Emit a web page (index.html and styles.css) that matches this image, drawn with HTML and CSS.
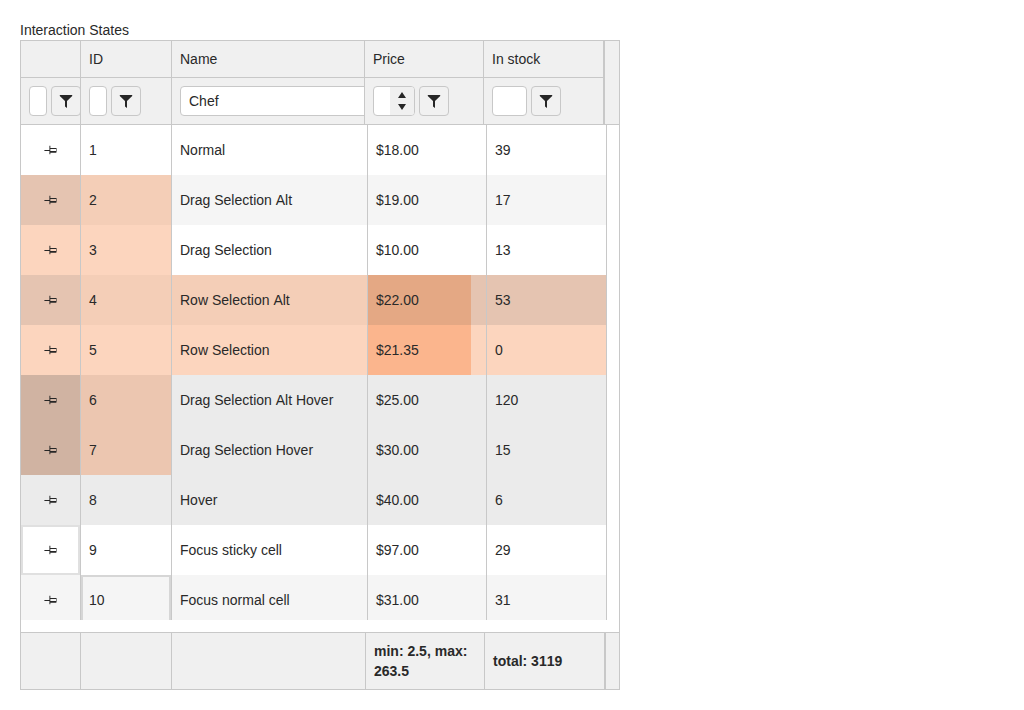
FILE: index.html
```html
<!DOCTYPE html>
<html lang="en">
<head>
<meta charset="utf-8">
<title>Interaction States</title>
<link rel="stylesheet" href="styles.css">
</head>
<body>
<svg class="defs" aria-hidden="true">
  <symbol id="filter" viewBox="0 0 16 16"><path d="M1.8 2h12.4v1L9 8v7l-2-1.5V8L1.8 3z"/></symbol>
  <symbol id="pin" viewBox="0 0 13 10">
    <path fill="#262626" d="M.4 5H6v1H.4zM6 3h6v1H6zM6 6h6v1.7H6z"/>
    <path fill="#262626" fill-opacity=".6" d="M5 .8h1.6v8.4H5zM12 3h.9v4.5H12z"/>
  </symbol>
</svg>
<h1 class="title">Interaction States</h1>
<main class="grid">
  <header class="head">
    <div class="head-cols">
      <div class="cell"></div><div class="cell">ID</div><div class="cell">Name</div><div class="cell">Price</div><div class="cell">In stock</div>
      <div class="cell filter"><span class="input w18"></span><button class="btn"><svg><use href="#filter"/></svg></button></div>
      <div class="cell filter"><span class="input w18"></span><button class="btn"><svg><use href="#filter"/></svg></button></div>
      <div class="cell filter"><span class="input wide">Chef</span></div>
      <div class="cell filter"><span class="input numeric"><span class="spin"><svg viewBox="0 0 24 28"><path d="M8 11l4-6 4 6zM8 17h8l-4 6z"/></svg></span></span><button class="btn"><svg><use href="#filter"/></svg></button></div>
      <div class="cell filter"><span class="input w35"></span><button class="btn"><svg><use href="#filter"/></svg></button></div>
    </div>
  </header>
  <section class="body">
    <div class="row"><div class="cell"><svg class="pin"><use href="#pin"/></svg></div><div class="cell">1</div><div class="cell">Normal</div><div class="cell">$18.00</div><div class="cell">39</div></div>
    <div class="row alt"><div class="cell sel-dark"><svg class="pin"><use href="#pin"/></svg></div><div class="cell sel-alt">2</div><div class="cell">Drag Selection Alt</div><div class="cell">$19.00</div><div class="cell">17</div></div>
    <div class="row"><div class="cell sel"><svg class="pin"><use href="#pin"/></svg></div><div class="cell sel">3</div><div class="cell">Drag Selection</div><div class="cell">$10.00</div><div class="cell">13</div></div>
    <div class="row alt"><div class="cell sel-dark"><svg class="pin"><use href="#pin"/></svg></div><div class="cell sel-alt">4</div><div class="cell sel-alt">Row Selection Alt</div><div class="cell sel-dark marked-alt">$22.00</div><div class="cell sel-dark">53</div></div>
    <div class="row"><div class="cell sel"><svg class="pin"><use href="#pin"/></svg></div><div class="cell sel">5</div><div class="cell sel">Row Selection</div><div class="cell sel marked">$21.35</div><div class="cell sel">0</div></div>
    <div class="row hover"><div class="cell sel-hover-dark"><svg class="pin"><use href="#pin"/></svg></div><div class="cell sel-hover">6</div><div class="cell">Drag Selection Alt Hover</div><div class="cell">$25.00</div><div class="cell">120</div></div>
    <div class="row hover"><div class="cell sel-hover-dark"><svg class="pin"><use href="#pin"/></svg></div><div class="cell sel-hover">7</div><div class="cell">Drag Selection Hover</div><div class="cell">$30.00</div><div class="cell">15</div></div>
    <div class="row hover"><div class="cell"><svg class="pin"><use href="#pin"/></svg></div><div class="cell">8</div><div class="cell">Hover</div><div class="cell">$40.00</div><div class="cell">6</div></div>
    <div class="row"><div class="cell focus-sticky"><svg class="pin"><use href="#pin"/></svg></div><div class="cell">9</div><div class="cell">Focus sticky cell</div><div class="cell">$97.00</div><div class="cell">29</div></div>
    <div class="row alt"><div class="cell"><svg class="pin"><use href="#pin"/></svg></div><div class="cell focus">10</div><div class="cell">Focus normal cell</div><div class="cell">$31.00</div><div class="cell">31</div></div>
  </section>
  <footer class="foot">
    <div class="cell"></div><div class="cell"></div><div class="cell"></div><div class="cell">min: 2.5, max: 263.5</div><div class="cell">total: 3119</div><div class="foot-end"></div>
  </footer>
</main>
</body>
</html>
```
FILE: styles.css
```css
* { box-sizing: border-box; }
body {
  margin: 0;
  padding: 20px;
  background: #fff;
  color: #292929;
  font: 14px/20px "Liberation Sans", Arial, sans-serif;
  font-kerning: none;
}
.defs { display: none; }
.title { margin: 0; font-size: 14px; font-weight: 400; }
.grid {
  display: flex;
  flex-direction: column;
  width: 600px;
  height: 650px;
  border: 1px solid #c8c8c8;
}
.cell {
  display: flex;
  align-items: center;
  padding: 0 8px;
  border-right: 1px solid #c8c8c8;
  overflow: hidden;
}
.head { height: 84px; flex: none; background: #f0f0f0; border-bottom: 1px solid #c8c8c8; }
.head-cols {
  display: grid;
  grid-template-columns: 60px 91px 193px 119px 120px;
  grid-template-rows: 37px 46px;
  width: 584px;
  border-right: 1px solid #c8c8c8;
}
.head-cols .cell:nth-child(-n+5) { border-bottom: 1px solid #c8c8c8; }
.filter { gap: 4px; }
.input, .btn {
  flex: none;
  height: 30px;
  border: 1px solid #c8c8c8;
  border-radius: 4px;
}
.input { background: #fff; }
.w18 { width: 18px; }
.w35 { width: 35px; }
.wide { width: 210px; padding: 4px 8px; }
.numeric { display: flex; justify-content: flex-end; width: 42px; overflow: hidden; }
.spin { width: 24px; height: 28px; background: #f0f0f0; fill: #262626; }
.spin svg { display: block; width: 24px; height: 28px; }
.btn {
  display: flex;
  align-items: center;
  justify-content: center;
  width: 30px;
  padding: 0;
  background: #f1f1f1;
  fill: #262626;
}
.btn svg { width: 16px; height: 16px; }
.body { height: 495px; flex: none; overflow: hidden; }
.row {
  display: grid;
  grid-template-columns: 60px 91px 196px 119px 120px;
  width: 586px;
  height: 50px;
}
.row .cell:first-child { justify-content: center; }
.pin { width: 13px; height: 10px; }
.alt { background: #f5f5f5; }
.hover { background: #ebebeb; }
.sel { background: #fcd5be; }
.sel-alt { background: #f4ceb7; }
.sel-dark { background: #e5c4b1; }
.sel-hover { background: #ecc6b0; }
.sel-hover-dark { background: #d0b3a2; }
.marked { background: linear-gradient(to right, #fbb58d 103px, #fcd5be 103px); }
.marked-alt { background: linear-gradient(to right, #e4a884 103px, #e5c4b1 103px); }
.focus-sticky { box-shadow: inset 0 0 0 2px #e0e0e0; }
.focus { box-shadow: inset 0 0 0 2px #d6d6d6; }
.foot {
  display: grid;
  grid-template-columns: 60px 91px 194px 119px 120px 1fr;
  height: 57px;
  margin-top: auto;
  background: #f0f0f0;
  border-top: 1px solid #c8c8c8;
  font-weight: 700;
}
.foot-end { border-left: 1px solid #c8c8c8; }
```
